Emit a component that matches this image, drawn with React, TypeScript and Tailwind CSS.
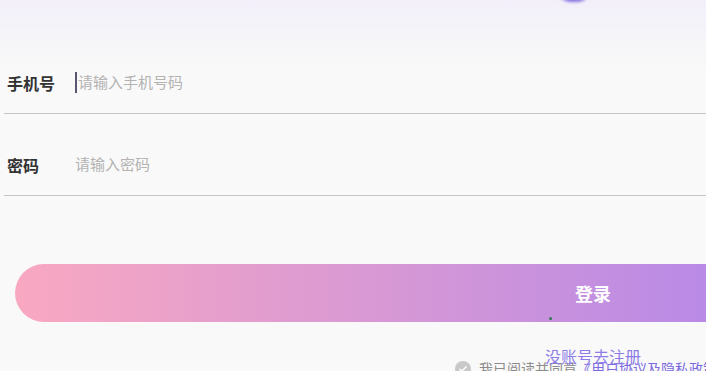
import React from 'react';

const font = { fontFamily: '"Noto Sans CJK SC", "Noto Sans", sans-serif' };

interface FieldProps {
    label: string;
    placeholder: string;
    focused?: boolean;
}

const Field: React.FC<FieldProps> = ({ label, placeholder, focused }) => {
    return (
        <div className="flex h-[58px] items-center border-b-[1.5px] border-[#c6c5ca] pb-[4px]">
            <span className="w-[71px] shrink-0 pl-[3px] text-[16px] font-bold text-[#333333]">{label}</span>
            <div className="flex items-center">
                {focused && <span className="mr-[1px] h-[21px] w-[2px] bg-[#5a5570]" />}
                <span className="text-[15px] text-[#b3b3b3]">{placeholder}</span>
            </div>
        </div>
    );
};

export default function App() {
    return (
        <div
            className="relative h-[371px] w-[706px] overflow-hidden bg-[linear-gradient(180deg,#f2effa_0%,#f6f5f9_40px,#f9f9f9_70px)]"
            style={font}
        >
            {/* logo peeking from the top */}
            <div className="absolute left-[558px] top-[-24px] h-[26px] w-[32px] rounded-full bg-[#8a74e0] blur-[1.5px]" />

            <div className="w-[1186px]">
                {/* Form fields */}
                <div className="ml-[4px] pt-[56px]">
                    <Field label="手机号" placeholder="请输入手机号码" focused />
                    <div className="mt-[24px]">
                        <Field label="密码" placeholder="请输入密码" />
                    </div>
                </div>

                {/* Login button */}
                <div className="relative mx-[15px] mt-[68px]">
                    <button className="flex h-[58px] w-full items-center justify-center rounded-full bg-[linear-gradient(90deg,#f9a8c1_0%,#b98ae6_60%,#9d80ef_100%)] text-[18px] font-bold text-white">
                        登录
                    </button>
                    <span className="absolute left-[534px] top-[53px] h-[3px] w-[3px] rounded-full bg-[#2f7a4f]" />
                </div>

                {/* Footer */}
                <div className="relative mt-[36px] flex items-center justify-center gap-[8px] text-[14px]">
                    <span className="flex h-[16px] w-[16px] items-center justify-center rounded-full bg-[#c9c9c9]">
                        <svg viewBox="0 0 16 16" className="h-[10px] w-[10px]" fill="none" stroke="white" strokeWidth="2.4" strokeLinecap="round" strokeLinejoin="round">
                            <path d="M3 8.5l3 3 7-7" />
                        </svg>
                    </span>
                    <span className="text-[#8c8c8c]">
                        我已阅读并同意<span className="text-[#7b6ae0]">《用户协议及隐私政策》</span>
                    </span>
                    <span className="absolute left-1/2 top-[-14px] -translate-x-1/2 text-[16px] text-[#8e7ce8]">没账号去注册</span>
                </div>
            </div>
        </div>
    );
}
